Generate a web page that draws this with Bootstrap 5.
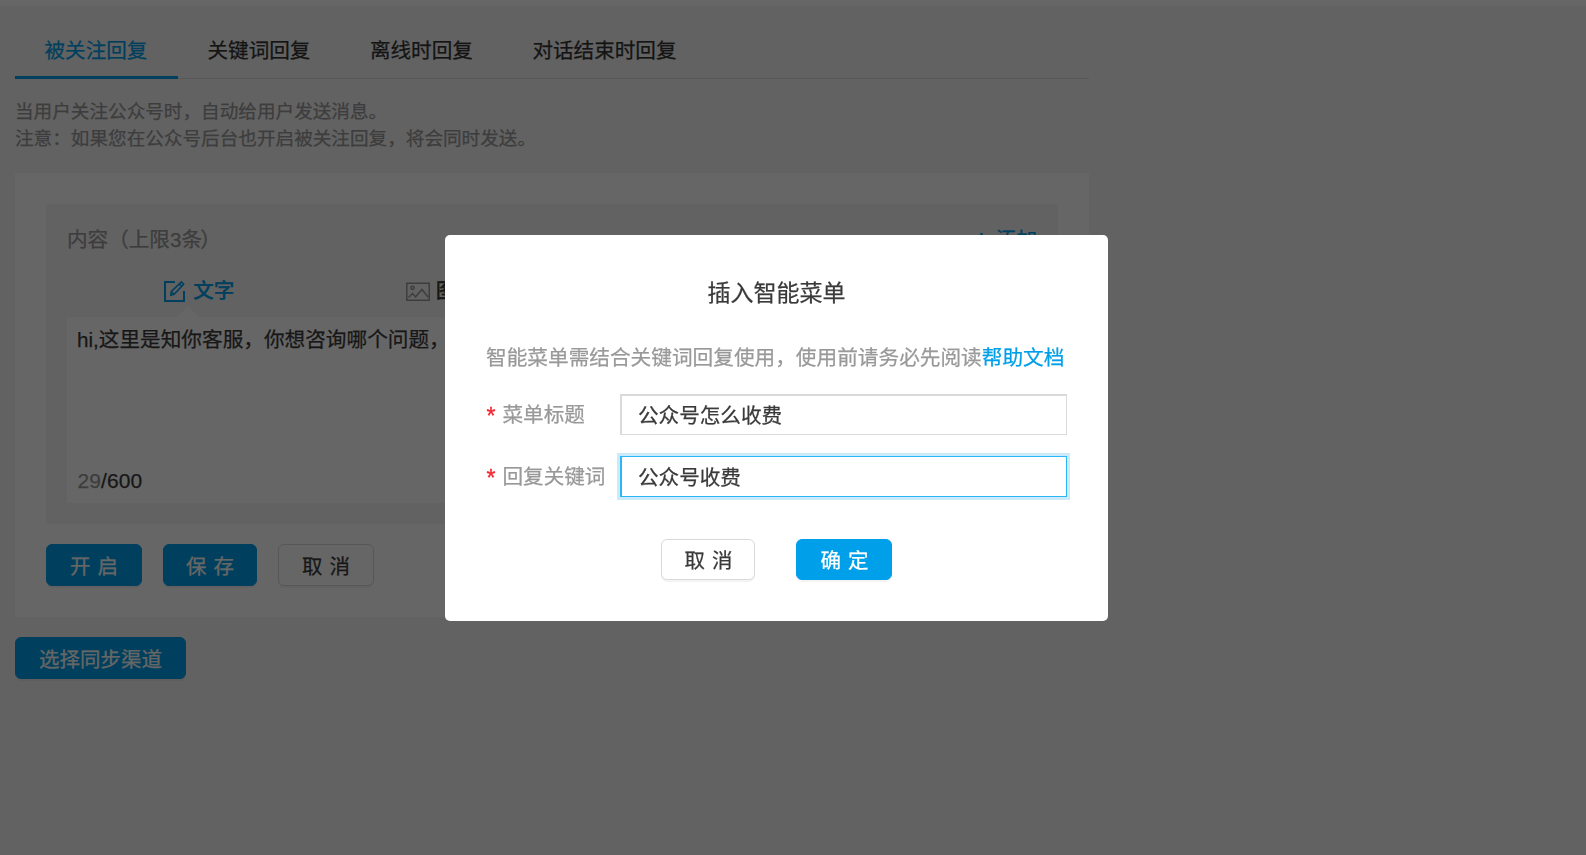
<!DOCTYPE html>
<html lang="zh-CN">
<head>
<meta charset="utf-8">
<meta name="viewport" content="width=device-width, initial-scale=1">
<title>公众号自动回复</title>
<link href="https://cdn.jsdelivr.net/npm/bootstrap@5.3.0/dist/css/bootstrap.min.css" rel="stylesheet">
<style>
  :root { --brand: #009fe9; --ink: #3a3a3a; --muted: #999; }
  html, body { height: 100%; overflow: hidden; }
  body { background: #f5f5f5; color: var(--ink); font: 20.6px/30px "Liberation Sans", "Noto Sans CJK SC", sans-serif; border-top: 6px solid #fff; -webkit-text-stroke: .25px; }
  .page { width: 1074px; margin-left: 15px; }
  .reply-tabs { height: 73px; border-bottom: 1px solid #dcdcdc; }
  .reply-tabs .nav-link { padding: 30px 30px 0 29.5px; height: 73px; line-height: 30px; color: #333; border-bottom: 3px solid transparent; white-space: nowrap; }
  .reply-tabs .nav-link.active { color: var(--brand); border-color: var(--brand); padding-right: 30.5px; }
  .hint { font-size: 18.63px; line-height: 26.5px; color: var(--muted); margin: 20px 0 0; height: 74px; }
  .panel { background: #fff; height: 444px; padding: 31px; }
  .editor { background: #f4f4f4; height: 320px; padding: 21px 21px 20px; }
  .muted { color: var(--muted); }
  .brand { color: var(--brand); }
  .tight { letter-spacing: -1.8px; }
  .kinds { height: 62px; padding-top: 21px; }
  .kind { width: 25%; padding-left: 21px; height: 30px; font-weight: 500; }
  .pick::after { content: ""; position: absolute; left: 110px; bottom: -11px; border: 11px solid transparent; border-top: 0; border-bottom-color: #fff; }
  .message { background: #fff; height: 186px; padding: 8px 10px 7px; white-space: nowrap; }
  .greeting { font-size: 20.65px; }
  .count { font-size: 21px; padding-left: .5px; letter-spacing: .1px; }
  .actions { margin-top: 20px; }
  .btn { height: 42px; padding: 3px 0 0; border-radius: 6px; font-size: 20.5px; line-height: 37px; word-spacing: 1.5px; box-shadow: 0 2px 0 rgba(0,0,0,.045); white-space: nowrap; -webkit-text-stroke: .25px; }
  .btn-brand, .btn-brand:hover { background: var(--brand); border-color: var(--brand); color: #fff; }
  .btn-plain, .btn-plain:hover { background: #fff; border-color: #d9d9d9; color: var(--ink); }
  .w94 { width: 94px; } .w96 { width: 96px; } .w171 { width: 171px; }
  .gap-save { margin: 0 21px; }
  .sync { margin-top: 20px; }
  .modal-backdrop { --bs-backdrop-opacity: .6; width: 100%; height: 100%; }
  .modal-dialog { width: 663px; max-width: none; margin: 235px 0 0 445px; }
  .modal-content { height: 386px; border: 0; border-radius: 5px; padding: 42px 41px 0; color: var(--ink); }
  .modal-title { font-size: 23px; line-height: 32px; font-weight: 400; }
  .tip { margin: 34px 0 0; font-size: 20.66px; line-height: 30px; white-space: nowrap; }
  .field { height: 41px; }
  .field + .field { margin-top: 21px; }
  .first-field { margin-top: 21px; }
  .field label { width: 134px; color: var(--muted); white-space: nowrap; }
  .star { color: #f5222d; width: 16.5px; padding-left: .5px; display: inline-block; font-size: 23px; line-height: 20px; vertical-align: -2px; -webkit-text-stroke: .3px; }
  .form-control { width: 447px; height: 41px; border-radius: 0; border: 1px solid #d9dbdb; border-left-width: 2px; border-top-width: 2px; padding: 0 17px 2px 16px; font-size: 20.6px; line-height: 35px; color: var(--ink); -webkit-text-stroke: .25px; }
  .form-control.focused { border-color: #2bb7f5; border-top-width: 1px; box-shadow: 0 0 0 3px #cbebfb; }
  .modal .btn { height: 41px; line-height: 37px; padding: 2px 0 0 1px; }
  .choices { margin-top: 42px; gap: 41px; }
</style>
</head>
<body>
<main class="page">
  <nav class="nav reply-tabs flex-nowrap">
    <a class="nav-link active" href="#">被关注回复</a>
    <a class="nav-link" href="#">关键词回复</a>
    <a class="nav-link" href="#">离线时回复</a>
    <a class="nav-link" href="#">对话结束时回复</a>
  </nav>
  <p class="hint">当用户关注公众号时，自动给用户发送消息。<br>注意：如果您在公众号后台也开启被关注回复，将会同时发送。</p>
  <section class="panel">
    <div class="editor">
      <div class="d-flex justify-content-between">
        <span class="muted">内容（上限3<span class="tight">条）</span></span>
        <span class="brand d-flex align-items-center"><svg class="me-2" width="15" height="15" viewBox="0 0 15 15" stroke="currentColor" stroke-width="2.4"><path d="M8.5 0v15M1 7.5h15"/></svg>添加</span>
      </div>
      <div class="kinds d-flex">
        <div class="kind pick brand position-relative d-flex justify-content-center align-items-center">
          <svg class="me-2" width="22" height="22" viewBox="0 0 22 22" fill="none" stroke="currentColor" stroke-width="2"><path d="M12 2H2v19h19V11"/><path stroke-width="1.6" d="M7.8 15.2l.6-3.8L18.4 2l2.2 2.3L11.1 14.3zM16.3 4l2.3 2.3M8.3 11.5l2.8 2.8"/></svg>文字
        </div>
        <div class="kind d-flex justify-content-center align-items-center">
          <svg class="muted" style="margin-right:6px" width="24" height="19" viewBox="0 0 24 19" fill="none" stroke="currentColor" stroke-width="1.5"><path d="M.8 1.3h22.4v17H.8zM2.5 15.5l4-4 3 3.3L16 7.5l6 7.5"/><circle cx="6.5" cy="5.8" r="1.6"/></svg>图片
        </div>
      </div>
      <div class="message d-flex flex-column justify-content-between">
        <div class="greeting">hi,这里是知你客服，你想咨询哪个问题，</div>
        <div class="count"><span class="muted">29</span>/600</div>
      </div>
    </div>
    <div class="actions d-flex">
      <button class="btn btn-brand w96">开 启</button>
      <button class="btn btn-brand w94 gap-save">保 存</button>
      <button class="btn btn-plain w96">取 消</button>
    </div>
  </section>
  <button class="btn btn-brand w171 sync">选择同步渠道</button>
</main>

<div class="modal-backdrop show"></div>
<div class="modal d-block" tabindex="-1" role="dialog">
  <div class="modal-dialog">
    <div class="modal-content">
      <h5 class="modal-title text-center">插入智能菜单</h5>
      <p class="tip muted">智能菜单需结合关键词回复使用，使用前请务必先阅读<span class="brand">帮助文档</span></p>
      <div class="field first-field d-flex align-items-center">
        <label for="menuTitle"><span class="star">*</span>菜单标题</label>
        <input id="menuTitle" class="form-control" value="公众号怎么收费">
      </div>
      <div class="field d-flex align-items-center">
        <label for="keyword"><span class="star">*</span>回复关键词</label>
        <input id="keyword" class="form-control focused" value="公众号收费">
      </div>
      <div class="choices d-flex justify-content-center">
        <button class="btn btn-plain w94">取 消</button>
        <button class="btn btn-brand w96">确 定</button>
      </div>
    </div>
  </div>
</div>
<script src="https://cdn.jsdelivr.net/npm/bootstrap@5.3.0/dist/js/bootstrap.bundle.min.js"></script>
</body>
</html>
